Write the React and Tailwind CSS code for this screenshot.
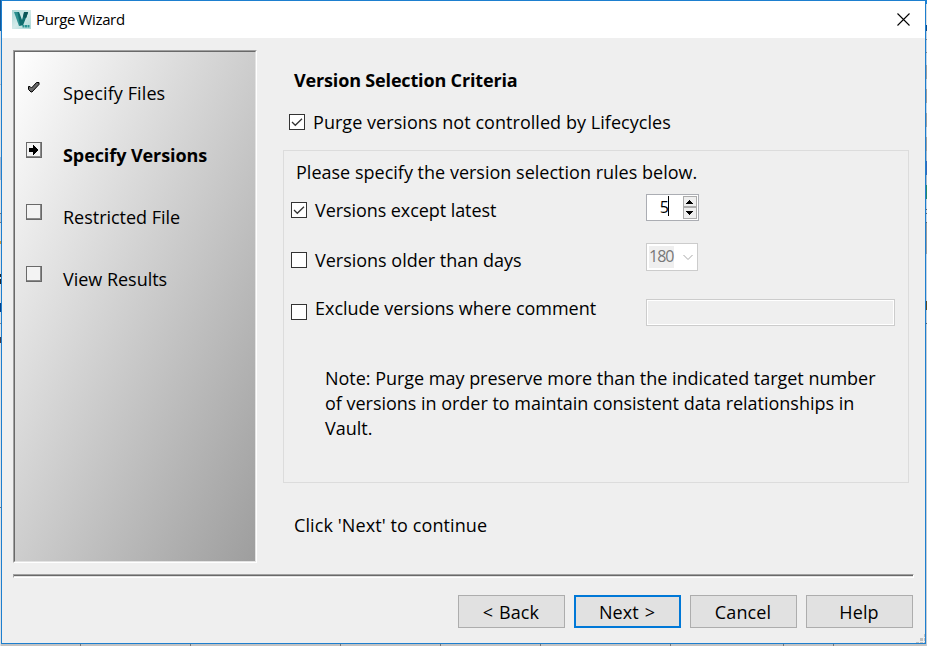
import clsx from "clsx"

const steps = [
  { label: "Specify Files", state: "done", tracking: "tracking-[0.1px]" },
  { label: "Specify Versions", state: "current", tracking: "tracking-[-0.08px]" },
  { label: "Restricted File", state: "pending" },
  { label: "View Results", state: "pending" },
]

const leftEdge = [
  ["h-[31px]", "bg-[#12599b]"],
  ["h-[53px]", "bg-[#d5dbe3]"],
  ["h-px", "bg-[#b5bac0]"],
  ["h-[72px]", "bg-[#dce0e5]"],
  ["h-[23px]", "bg-[#a9b9d0]"],
  ["h-[33px]", "bg-[#dce0e5]"],
  ["h-px", "bg-[#70757c]"],
  ["h-[8px]", "bg-[#c4c8ce]"],
  ["h-px", "bg-[#70757c]"],
  ["h-[18px]", "bg-[#dce0e5]"],
  ["h-[3px]", "bg-[#d19a3c]"],
  ["h-[30px]", "bg-[#dce0e5]"],
  ["h-[3px]", "bg-[#20242a]"],
  ["h-[2px]", "bg-[#dce0e5]"],
  ["h-[5px]", "bg-[#20242a]"],
  ["h-[19px]", "bg-[#dce0e5]"],
  ["h-[9px]", "bg-[#063f86]"],
  ["h-[11px]", "bg-[#dce0e5]"],
  ["h-px", "bg-[#80858c]"],
  ["h-[13px]", "bg-[#dce0e5]"],
  ["h-[6px]", "bg-[#423a45]"],
  ["h-[164px]", "bg-[#dce0e5]"],
  ["h-px", "bg-[#70757c]"],
  ["grow", "bg-[#dce0e5]"],
]

const rightEdge = [
  ["h-[4px]", "bg-[#1c82d8]"],
  ["h-[21px]", "bg-[#dce0e5]"],
  ["h-[6px]", "bg-[#0c4c8e]"],
  ["h-[8px]", "bg-[#c4d2e2]"],
  ["h-px", "bg-[#80858c]"],
  ["h-[12px]", "bg-[#c4d2e2]"],
  ["h-px", "bg-[#80858c]"],
  ["h-[12px]", "bg-[#c4d2e2]"],
  ["h-[14px]", "bg-[#9b9ea3]"],
  ["h-[10px]", "bg-[#c4d2e2]"],
  ["h-[14px]", "bg-[#9b9ea3]"],
  ["h-[10px]", "bg-[#c4d2e2]"],
  ["h-[14px]", "bg-[#9b9ea3]"],
  ["h-[10px]", "bg-[#c4d2e2]"],
  ["h-[14px]", "bg-[#9b9ea3]"],
  ["h-[10px]", "bg-[#a9b7c8]"],
  ["h-[14px]", "bg-[#3668b8]"],
  ["h-[10px]", "bg-[#a9b7c8]"],
  ["h-[14px]", "bg-[#25896c]"],
  ["h-[10px]", "bg-[#c4d2e2]"],
  ["h-px", "bg-[#60656c]"],
  ["h-[3px]", "bg-[#c4d2e2]"],
  ["h-px", "bg-[#60656c]"],
  ["h-[8px]", "bg-[#c4d2e2]"],
  ["h-px", "bg-[#60656c]"],
  ["h-[31px]", "bg-[#999da3]"],
  ["h-[47px]", "bg-[#c4d2e2]"],
  ["h-[9px]", "bg-[#5c4a24]"],
  ["h-[13px]", "bg-[#c4ccd6]"],
  ["h-px", "bg-[#60656c]"],
  ["grow", "bg-[#c4ccd6]"],
]

function DesktopEdge({ segments }) {
  return (
    <div className="flex h-full w-px shrink-0 flex-col">
      {segments.map(([height, color], index) => (
        <div key={index} className={clsx("shrink-0", height, color)} />
      ))}
    </div>
  )
}

function VaultLogo() {
  return (
    <svg width="19" height="19" viewBox="0 0 19 19">
      <defs>
        <linearGradient id="tile" x1="0" y1="0" x2="1" y2="1">
          <stop offset="0" stopColor="#a9d8d7" />
          <stop offset="0.5" stopColor="#d3eae9" />
          <stop offset="1" stopColor="#a9d6d5" />
        </linearGradient>
      </defs>
      <rect width="19" height="19" fill="url(#tile)" />
      <path d="M2 2h4.5l3 8.5L8.5 16H7z" fill="#2c8f8f" />
      <path d="M5.5 2H7l3 8 2-7.5h4L11 15.500H8z" fill="#0f6c6e" />
      <path d="M12 2h4.200l-2 6-3-1z" fill="#0c5558" />
      <path d="M10.500 15H12.500v2.500h-2zM13 15h2v2.500h-2zM15.500 15h2v2.500h-2z" fill="#2a9493" />
    </svg>
  )
}

function StepMarker({ state }) {
  if (state === "done") {
    return (
      <svg className="size-4 shrink-0" viewBox="0 0 16 16">
        <path d="M2.5 6.500H4L5.500 8l5-5.500H13v2l-7 7.500H5L2.500 9.500z" fill="#6a6a6a" stroke="#000" />
      </svg>
    )
  }

  return (
    <div className="size-4 shrink-0 border border-[#696969] bg-[#f3f3f3] shadow-[inset_-1px_-1px_#8a8a8a]">
      {state === "current" && (
        <svg className="size-[14px]" viewBox="0 0 14 14" shapeRendering="crispEdges">
          <path d="M2 5h4V2h1v1h1v1h1v1h1v1h1v2h-1v1h-1v1h-1v1h-1v1H6V9H2z" fill="#000" />
        </svg>
      )}
    </div>
  )
}

function Checkbox({ checked }) {
  return (
    <div className="size-4 shrink-0 border border-[#333] bg-white">
      {checked && (
        <svg className="size-[14px]" viewBox="0 0 14 14" fill="none" stroke="#333" strokeWidth="1.3">
          <path d="M2 7l3.3 3.3L12 3.8" />
        </svg>
      )}
    </div>
  )
}

function WizardButton({ children, primary }) {
  return (
    <button
      className={clsx(
        "h-[33px] w-[107px] bg-[#e1e1e1] pr-px text-center leading-6 tracking-[0.1px] [word-spacing:1px]",
        primary ? "border-2 border-[#0078d7]" : "border border-[#adadad]"
      )}
    >
      {children}
    </button>
  )
}

export default function App() {
  return (
    <div className="flex h-[646px] w-[927px] overflow-hidden bg-[#c3c3c3] font-['Open_Sans',sans-serif] text-[18px] leading-6 tracking-[-0.02px] whitespace-nowrap text-black">
      <DesktopEdge segments={leftEdge} />
      <div className="flex w-[925px] flex-col">
        <div className="relative flex h-[644px] flex-col border border-[#1d7fcf] bg-[#efefef]">
          {/* Title bar */}
          <div className="flex h-[37px] shrink-0 items-center bg-white pl-[10px] text-[15px] tracking-[-0.37px]">
            <VaultLogo />
            <span className="mb-[2px] ml-[5px]">Purge Wizard</span>
            <svg className="mr-[15px] mb-px ml-auto size-[13px]" viewBox="0 0 13 13" stroke="#000" strokeWidth="1.1">
              <path d="M.5.5l12 12M12.5.5l-12 12" />
            </svg>
          </div>

          <div className="flex pt-3 pl-[11px]">
            {/* Step list */}
            <div className="h-[513px] w-[244px] shrink-0 border border-t-[#a0a0a0] border-r-white border-b-white border-l-[#a0a0a0]">
              <div className="flex h-full flex-col gap-[38px] border border-t-[#696969] border-r-[#e3e3e3] border-b-[#e3e3e3] border-l-[#696969] bg-linear-to-br from-white to-[#9e9e9e] pt-[29px] pl-[11px]">
                {steps.map((step) => (
                  <div key={step.label} className="flex h-6 gap-[21px]">
                    <div className="-mt-px">
                      <StepMarker state={step.state} />
                    </div>
                    <span className={clsx(step.state === "current" && "font-bold", step.tracking)}>{step.label}</span>
                  </div>
                ))}
              </div>
            </div>

            <div className="ml-[26px] pt-[18px]">
              <h1 className="ml-[11px] font-bold tracking-[-0.16px]">Version Selection Criteria</h1>
              <div className="mt-[18px] ml-[6px] flex gap-2">
                <div className="mt-1">
                  <Checkbox checked />
                </div>
                <span className="tracking-[0.05px]">Purge versions not controlled by Lifecycles</span>
              </div>

              {/* Selection rules */}
              <div className="mt-4 h-[333px] w-[626px] border border-[#dcdcdc] pt-[9px] pl-[7px]">
                <p className="ml-[5px] tracking-[0.01px]">Please specify the version selection rules below.</p>
                <div className="mt-[10px] flex h-[27px] items-start">
                  <div className="mt-2 flex w-[355px] gap-2">
                    <Checkbox checked />
                    <span className="-mt-1 tracking-[-0.07px]">Versions except latest</span>
                  </div>
                  <div className="flex h-[27px] w-[53px] border border-[#abadb3] bg-white p-px text-[16px]">
                    <div className="flex w-[21px] justify-end">
                      <span className="-mt-px tracking-[-0.8px]">5</span>
                      <span className="h-5 w-px bg-black" />
                    </div>
                    <div className="ml-auto flex w-[14px] flex-col">
                      <div className="flex h-[11px] items-center justify-center border border-[#acacac] bg-[#efefef] pr-px">
                        <svg width="7" height="4" shapeRendering="crispEdges">
                          <path d="M3 0h1v1h1v1h1v1h1v1H0V3h1V2h1V1h1z" />
                        </svg>
                      </div>
                      <div className="flex h-[12px] items-center justify-center border border-[#acacac] bg-[#efefef] pr-px">
                        <svg width="7" height="4" shapeRendering="crispEdges">
                          <path d="M0 0h7v1H6v1H5v1H4v1H3V3H2V2H1V1H0z" />
                        </svg>
                      </div>
                    </div>
                  </div>
                </div>
                <div className="mt-[22px] flex h-[28px] items-start">
                  <div className="mt-[9px] flex w-[355px] gap-2">
                    <Checkbox />
                    <span className="-mt-1 tracking-[-0.01px]">Versions older than days</span>
                  </div>
                  <div className="flex h-[28px] w-[52px] items-center border border-[#ccc] bg-white pl-[2px] text-[16px] text-[#787878]">
                    <span className="h-[22px] w-[25px] bg-[#efefef] leading-[21px] tracking-[-1px]">180</span>
                    <svg className="ml-[9px]" width="10" height="7" fill="none" stroke="#a8a8a8">
                      <path d="M.5 1l4.5 4.5L9.5 1" />
                    </svg>
                  </div>
                </div>
                <div className="mt-[28px] flex h-[27px] items-start">
                  <div className="mt-[5px] flex w-[355px] gap-2">
                    <Checkbox />
                    <span className="-mt-2">Exclude versions where comment</span>
                  </div>
                  <div className="h-[27px] w-[249px] border border-[#ccc] bg-[#efefef] shadow-[inset_0_0_0_1px_#fff]" />
                </div>
                <p className="mt-10 ml-[34px] leading-[25px]">
                  Note: Purge may preserve more than the indicated target number
                  <br />
                  of versions in order to maintain consistent data relationships in
                  <br />
                  Vault.
                </p>
              </div>

              <p className="mt-[30px] ml-[11px] tracking-[0.1px]">Click 'Next' to continue</p>
            </div>
          </div>

          {/* Separator */}
          <div className="mt-[11px] ml-[11px] h-[4px] w-[901px] border border-t-[#a0a0a0] border-r-white border-b-white border-l-[#a0a0a0]">
            <div className="h-px bg-[#696969]" />
            <div className="h-px bg-[#e3e3e3]" />
          </div>

          <div className="mt-[17px] flex justify-end gap-[9px] pr-3">
            <WizardButton>&lt; Back</WizardButton>
            <WizardButton primary>Next &gt;</WizardButton>
            <WizardButton>Cancel</WizardButton>
            <WizardButton>Help</WizardButton>
          </div>

          <svg className="absolute right-0 bottom-0" width="9" height="9" fill="#bfbfbf" shapeRendering="crispEdges">
            <path d="M8 0h1v3H8zM4 4h3v3H4zM8 4h1v3H8zM0 8h3v1H0zM4 8h3v1H4zM8 8h1v1H8z" />
          </svg>
        </div>
        {/* Grid lines behind the window */}
        <div className="flex h-[2px] bg-[#c3c3c3] pl-[79px]">
          <div className="w-[110px] border-l border-[#777]" />
          <div className="w-[150px] border-l border-[#777]" />
          <div className="w-[100px] border-l border-[#777]" />
          <div className="w-[100px] border-l border-[#777]" />
          <div className="w-[130px] border-l border-[#777]" />
          <div className="w-[113px] border-l border-[#777]" />
          <div className="w-[50px] border-l border-[#777]" />
          <div className="border-l border-[#777]" />
        </div>
      </div>
      <DesktopEdge segments={rightEdge} />
    </div>
  )
}
